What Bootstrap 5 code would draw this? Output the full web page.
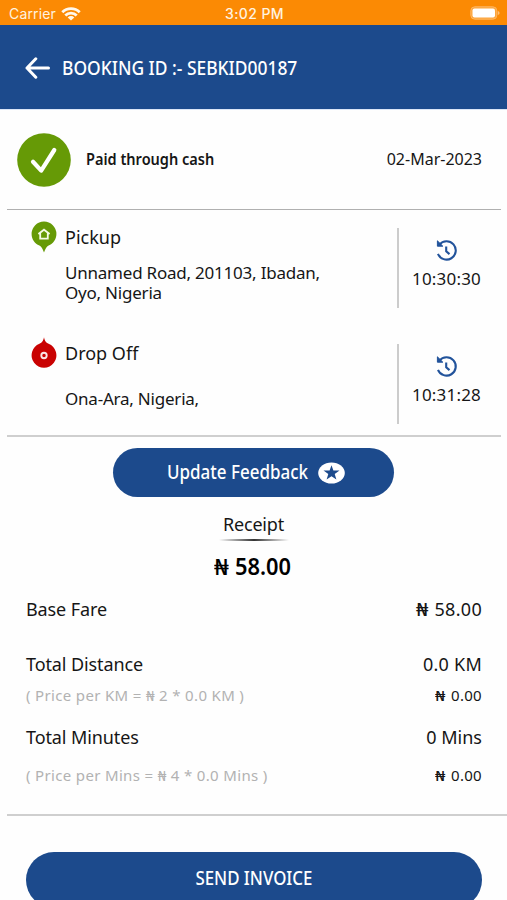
<!DOCTYPE html>
<html lang="en">
<head>
<meta charset="utf-8">
<meta name="viewport" content="width=device-width, initial-scale=1">
<title>Booking receipt</title>
<link href="https://cdn.jsdelivr.net/npm/bootstrap@5.3.0/dist/css/bootstrap.min.css" rel="stylesheet">
<style>
body{font-family:"Noto Sans",sans-serif;font-size:18px;color:#161616;background:#fefefe;height:900px;overflow:hidden;line-height:20px;white-space:nowrap}
svg{display:block;flex:none}
.narrow{display:inline-block;transform:scaleX(.9);transform-origin:left}
.statusbar{height:25px;background:#fb8a04;color:#fff3e0;font-family:Inter,sans-serif;font-size:14px;padding:3px 7px 0 9px}
.statusbar>div{flex:1 1 0}
.wifi,.battery{margin-top:-2px}
.wifi{margin-left:1px}
.carrier{letter-spacing:.16px}
.clock{font-weight:500;letter-spacing:.4px}
.apphead{height:84px;background:#1c4a8c;color:#fff;padding:2px 0 0 25px;gap:12px}
.apphead h1{font-size:19px;font-weight:500;line-height:20px;transform:scaleX(.917)}
.paid{height:100px;border-top:1px solid #dbe6f7;padding:0 25px 0 17px}
.method{font-size:16.5px;font-weight:600;margin:-2px 0 0 15px;transform:scaleX(.881)}
.date{font-size:16px;margin-top:-1px}
.divider{height:2px;background:#cfcfcf;margin:0 6px 0 7px}
.divider.thin{height:1px;background:#b0b0b0}
.divider.wide{margin:29px 0 0 7px}
.trips{height:225px;padding-top:18px}
.leg{height:80px;padding:0 13px 0 31px}
.leg+.leg{margin-top:36px}
.pin{width:34px}
.pin svg{margin-top:-7px}
.stop{margin-top:-1px}
.place{font-size:17px;letter-spacing:-.22px;margin-top:16px}
.place.low{margin-top:26px}
.time{width:97px;border-left:2px solid #ccc;padding-top:12px;font-size:17px;letter-spacing:.19px;gap:7px}
.blue-btn{background:#1c4a8c;color:#fff;font-weight:500;font-size:19px;border:0;padding:0;line-height:20px}
.feedback{width:281px;height:49px;gap:11px;margin-top:11px;padding:0 0 0 5px}
.feedback .narrow{transform:scaleX(.894);margin:-2px -17px 0 0}
.receipt{margin-top:17px;letter-spacing:-.19px}
.shade{width:70px;height:2px;margin-top:5px;background:linear-gradient(90deg,transparent,#333 50%,transparent)}
.total{font-size:22.5px;font-weight:600;color:#000;margin-top:16px}
.total .digits{transform:scaleX(.97);margin:0 -1px 0 7px}
.total .sign{display:inline-block;font-weight:500;transform:scaleX(1.15)}
.fares{padding:0 25px 0 26px}
.item{letter-spacing:-.1px}
.amount{letter-spacing:.25px}
.naira{letter-spacing:.3px}
.naira b,.sub b{display:inline-block;font-weight:500;transform:scaleX(1.2);margin-right:1.5px}
.note{font-size:15px;color:#b2b2b2;letter-spacing:.34px}
.sub{font-size:15px;letter-spacing:.3px}
.row-a{margin-top:22px}.row-b{margin-top:35px}.row-c{margin-top:11px}.row-d{margin-top:22px}.row-e{margin-top:18px}
.invoice{height:56px;margin:36px 25px 0 26px;padding-bottom:4px;border-radius:28px}
.invoice .narrow{transform:scaleX(.888);transform-origin:center}
</style>
</head>
<body>
<div class="statusbar d-flex align-items-center">
  <div class="d-flex align-items-center gap-1"><span class="carrier">Carrier</span>
    <svg class="wifi" width="20" height="15" viewBox="0 0 20 15" fill="none" stroke="#fff8ec" stroke-width="2.8"><path d="M1.3 6.2a12.2 12.2 0 0 1 17.4 0M4.3 9.5a8 8 0 0 1 11.4 0"/><path d="M10 14.6 6.7 11.5a4.6 4.6 0 0 1 6.6 0z" fill="#fff8ec" stroke="none"/></svg>
  </div>
  <span class="clock">3:02 PM</span>
  <div class="d-flex justify-content-end">
    <svg class="battery" width="30" height="14" viewBox="0 0 30 14"><rect x=".8" y=".8" width="26" height="12.4" rx="4" fill="#fca43a" stroke="#fdb765"/><rect x="2.5" y="2.5" width="22.5" height="9" rx="2" fill="#fff"/><path d="M27.8 5v4q1.8-.6 1.8-2t-1.8-2z" fill="#fdc07a"/></svg>
  </div>
</div>
<header class="apphead d-flex align-items-center">
  <svg width="25" height="22" viewBox="0 0 25 22" fill="none" stroke="#fff" stroke-width="3" stroke-linecap="round" stroke-linejoin="round"><path d="M23.5 11H2M10.8 1.8 2 11l8.8 9.2"/></svg>
  <h1 class="narrow m-0">BOOKING ID :- SEBKID00187</h1>
</header>
<section class="paid d-flex align-items-center">
  <svg width="54" height="54" viewBox="0 0 54 54"><circle cx="27" cy="27" r="26.8" fill="#669a06"/><path d="M16 28.8 24.2 37.6 37.3 17" fill="none" stroke="#fff" stroke-width="4.2" stroke-linecap="round" stroke-linejoin="round"/></svg>
  <span class="method narrow">Paid through cash</span><span class="date ms-auto">02-Mar-2023</span>
</section>
<div class="divider thin"></div>
<section class="trips">
  <div class="leg d-flex">
    <div class="pin"><svg width="26" height="32" viewBox="0 0 26 32"><path d="M13 .5A12.4 12.4 0 0 1 25.4 13c0 5.4-3.2 9.7-7.8 11.5-2.1.9-3.2 3.5-4.600 7-1.400-3.500-2.500-6.100-4.600-7C3.800 22.700.6 18.400.6 13A12.400 12.400 0 0 1 13 .5z" fill="#669a06"/><path d="M7.400 13 13 8.700l5.600 4.300M9.200 12v5.700h7.600V12" fill="none" stroke="#f4fbe6" stroke-width="1.800"/></svg></div>
    <div class="stop flex-grow-1"><div>Pickup</div><div class="place">Unnamed Road, 201103, Ibadan,<br>Oyo, Nigeria</div></div>
    <div class="time d-flex flex-column align-items-center">
      <svg width="22" height="22" viewBox="0 0 22 22" fill="none" stroke="#22539b" stroke-width="2.100"><path d="M3.400 4.600A9.200 9.200 0 1 1 2 13.800M10.200 6.400v4.800l3.300 2.900"/><path d="M1.400 .8v5.400h5.400z" fill="#22539b" stroke-width="1"/></svg>
      <span>10:30:30</span>
    </div>
  </div>
  <div class="leg d-flex">
    <div class="pin"><svg width="26" height="32" viewBox="0 0 26 32"><path d="M13 .3c.9 4 1.900 5.300 4.600 6.500A12.400 12.400 0 1 1 8.400 6.800C11.100 5.600 12.100 4.300 13 .3z" fill="#c90202"/><circle cx="13" cy="18.500" r="2.700" fill="none" stroke="#fbe4e4" stroke-width="1.900"/></svg></div>
    <div class="stop flex-grow-1"><div>Drop Off</div><div class="place low">Ona-Ara, Nigeria,</div></div>
    <div class="time d-flex flex-column align-items-center">
      <svg width="22" height="22" viewBox="0 0 22 22" fill="none" stroke="#22539b" stroke-width="2.100"><path d="M3.400 4.600A9.200 9.200 0 1 1 2 13.800M10.200 6.400v4.800l3.300 2.900"/><path d="M1.400 .8v5.400h5.400z" fill="#22539b" stroke-width="1"/></svg>
      <span>10:31:28</span>
    </div>
  </div>
</section>
<div class="divider"></div>
<section class="d-flex flex-column align-items-center">
  <button class="btn rounded-pill blue-btn feedback d-flex align-items-center justify-content-center text-white" type="button">
    <span class="narrow">Update Feedback</span>
    <svg width="27" height="22" viewBox="0 0 27 22"><ellipse cx="13.500" cy="11" rx="13.300" ry="10.600" fill="#fff"/><path d="M13.500 3.200 15.400 8.600H21.500L16.700 12.100 18.400 17.500 13.500 14.200 8.600 17.500 10.300 12.100 5.500 8.600H11.600z" fill="#1c4a8c"/></svg>
  </button>
  <div class="receipt">Receipt</div>
  <div class="shade"></div>
  <div class="total"><span class="sign">₦</span><span class="digits narrow">58.00</span></div>
</section>
<section class="fares">
  <div class="row-a d-flex justify-content-between"><span class="item">Base Fare</span><span class="naira"><b>₦</b> 58.00</span></div>
  <div class="row-b d-flex justify-content-between"><span class="item">Total Distance</span><span class="amount">0.0 KM</span></div>
  <div class="row-c d-flex justify-content-between"><span class="note">( Price per KM = ₦ 2 * 0.0 KM )</span><span class="sub"><b>₦</b> 0.00</span></div>
  <div class="row-d d-flex justify-content-between"><span class="item">Total Minutes</span><span>0 Mins</span></div>
  <div class="row-e d-flex justify-content-between"><span class="note">( Price per Mins = ₦ 4 * 0.0 Mins )</span><span class="sub"><b>₦</b> 0.00</span></div>
</section>
<div class="divider wide"></div>
<div class="d-grid"><button class="btn blue-btn invoice text-white" type="button"><span class="narrow">SEND INVOICE</span></button></div>
</body>
</html>
